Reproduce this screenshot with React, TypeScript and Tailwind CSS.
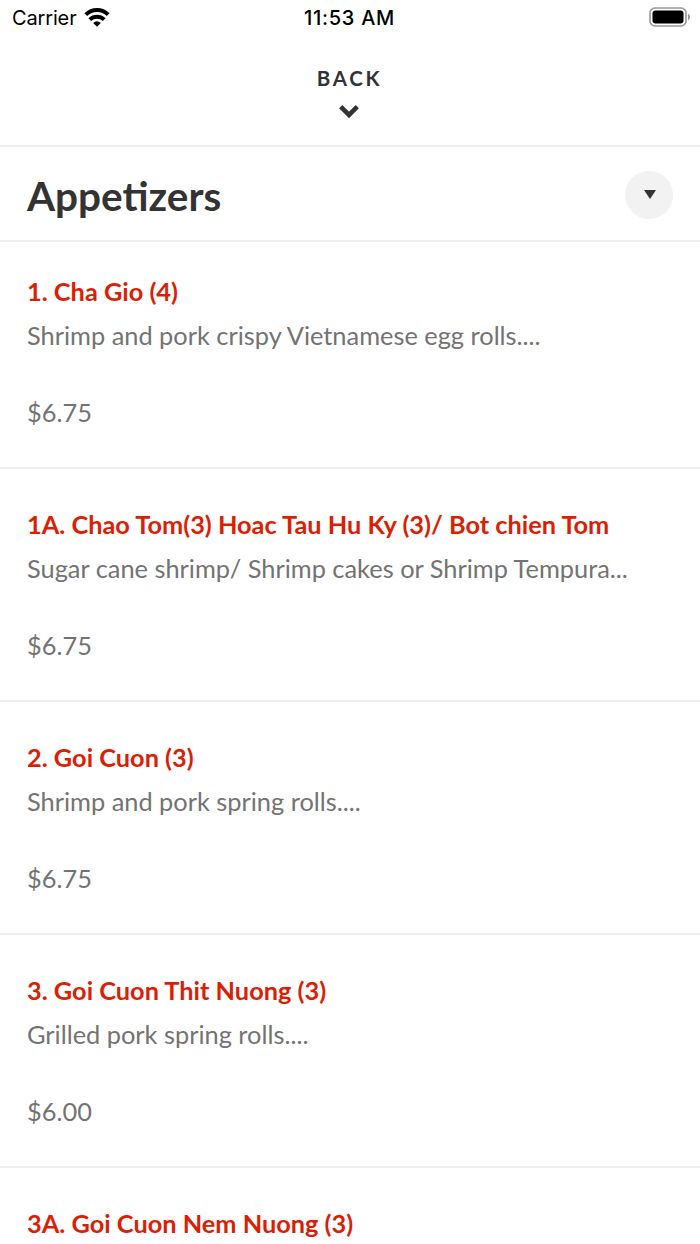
const items = [
  { name: '1. Cha Gio (4)', text: 'Shrimp and pork crispy Vietnamese egg rolls....', price: '$6.75' },
  { name: '1A. Chao Tom(3) Hoac Tau Hu Ky (3)/ Bot chien Tom', text: 'Sugar cane shrimp/ Shrimp cakes or Shrimp Tempura...', price: '$6.75' },
  { name: '2. Goi Cuon (3)', text: 'Shrimp and pork spring rolls....', price: '$6.75' },
  { name: '3. Goi Cuon Thit Nuong (3)', text: 'Grilled pork spring rolls....', price: '$6.00' },
  { name: '3A. Goi Cuon Nem Nuong (3)', text: '', price: '' },
];

function StatusBar() {
  return (
    <div className="grid h-9 grid-cols-[1fr_auto_1fr] items-center pl-3 pr-[9px] font-[Inter,sans-serif] text-black">
      <div className="flex items-center gap-[7px] text-[20px] tracking-[-0.15px]">
        <span>Carrier</span>
        <svg className="-mt-0.5" width="26" height="19" viewBox="0 0 26 19" fill="none" stroke="#000" strokeWidth="4">
          <path d="M1.8 6.6a16 16 0 0 1 22.4 0" />
          <path d="M5.8 11.6a10.4 10.4 0 0 1 14.4 0" />
          <path d="M13 18.8l-3.8-3.8a5.8 5.8 0 0 1 7.6 0z" fill="#000" stroke="none" />
        </svg>
      </div>
      <div className="whitespace-nowrap pr-1 text-center text-[20px] font-medium tracking-[0.7px]">11:53 AM</div>
      <div className="-mt-0.5 flex justify-end">
        <svg width="42" height="20" viewBox="0 0 42 20">
          <rect x="1" y="1" width="36" height="18" rx="5" fill="none" stroke="#999" strokeWidth="1.6" />
          <rect x="3.5" y="3.5" width="31" height="13" rx="3" fill="#000" />
          <path d="M39 6.5a4 4 0 0 1 0 7z" fill="#999" />
        </svg>
      </div>
    </div>
  );
}

export default function App() {
  return (
    <div className="h-[1244px] w-[700px] overflow-hidden bg-white font-[Lato,sans-serif]">
      <StatusBar />
      <div className="flex h-[111px] flex-col items-center border-b-2 border-[#f0f0f0] pt-[30px] text-[#333]">
        <div className="mr-px text-[20.5px] font-bold leading-6 tracking-[2.7px]">BACK</div>
        <svg className="mr-0.5 mt-3.5" width="20" height="15" viewBox="0 0 20 15" fill="none" stroke="#333" strokeWidth="4.6">
          <path d="M1.7 2.7L10 11L18.3 2.7" />
        </svg>
      </div>
      <div className="flex h-[95px] items-center justify-between border-b-2 border-[#f0f0f0] px-[27px]">
        <h1 className="pt-1.5 text-[40.5px] font-bold text-[#333]">Appetizers</h1>
        <div className="mt-0.5 flex size-12 items-center justify-center rounded-full bg-[#f2f2f2]">
          <svg className="ml-0.5" width="12" height="9" viewBox="0 0 12 9"><path d="M0 0h12L6 9z" fill="#333" /></svg>
        </div>
      </div>
      <main>
        {items.map((item) => (
          <div key={item.name} className="h-[233px] whitespace-nowrap border-b-2 border-[#f0f0f0] px-[27px] pt-[39px] text-[25.38px] leading-8 text-[#737373] first:h-[227px] first:pt-[33px]">
            <h2 className="text-[25.33px] font-bold text-[#dc1e05]">{item.name}</h2>
            <p className="mt-3">{item.text}</p>
            <p className="mt-[45px]">{item.price}</p>
          </div>
        ))}
      </main>
    </div>
  );
}
